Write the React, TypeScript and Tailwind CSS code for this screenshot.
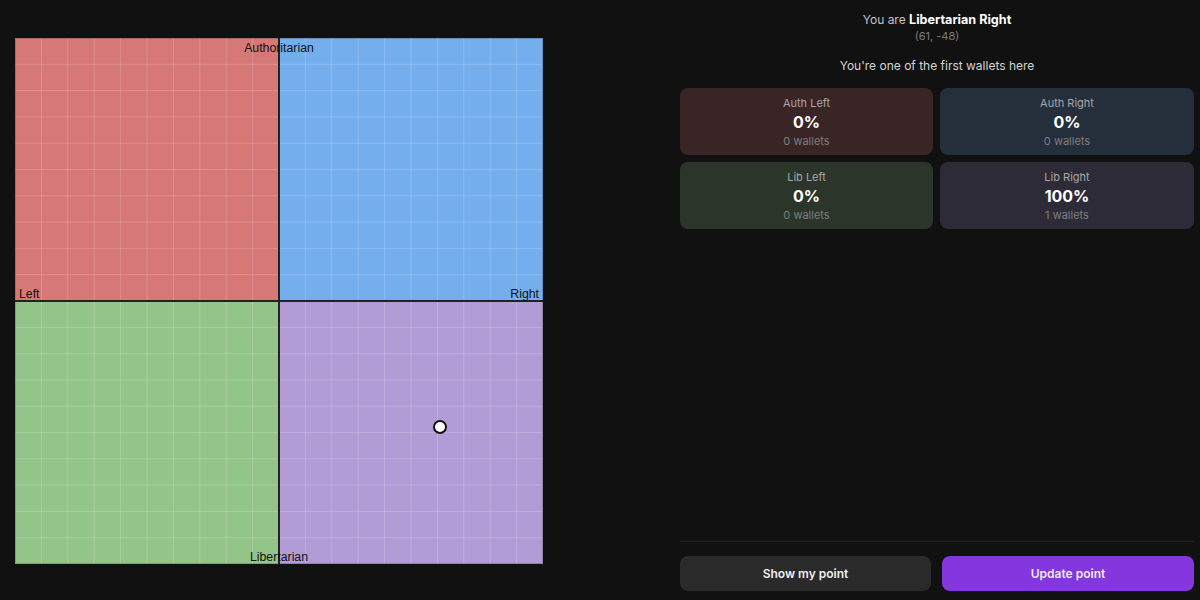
const quadrants = [
  { label: "Auth Left", pct: "0%", wallets: "0 wallets", bg: "bg-[#3a2526]" },
  { label: "Auth Right", pct: "0%", wallets: "0 wallets", bg: "bg-[#252f3b]" },
  { label: "Lib Left", pct: "0%", wallets: "0 wallets", bg: "bg-[#2b352a]" },
  { label: "Lib Right", pct: "100%", wallets: "1 wallets", bg: "bg-[#2e2b38]" },
];

const WIDTH = 528;
const HEIGHT = 526;
const MID_X = WIDTH / 2;
const MID_Y = HEIGHT / 2;

function Compass() {
  const steps = Array.from({ length: 19 }, (_, i) => i + 1);
  return (
    <svg width={WIDTH} height={HEIGHT} viewBox={`0 0 ${WIDTH} ${HEIGHT}`} className="block">
      <rect x="0" y="0" width={MID_X} height={MID_Y} fill="#d67875" />
      <rect x={MID_X} y="0" width={MID_X} height={MID_Y} fill="#74aeed" />
      <rect x="0" y={MID_Y} width={MID_X} height={MID_Y} fill="#93c48a" />
      <rect x={MID_X} y={MID_Y} width={MID_X} height={MID_Y} fill="#b19cd6" />
      {steps.map((i) => (
        <g key={i} stroke="#ffffff" strokeOpacity="0.18" strokeWidth="1">
          <line x1={(i * WIDTH) / 20} y1="0" x2={(i * WIDTH) / 20} y2={HEIGHT} />
          <line x1="0" y1={(i * HEIGHT) / 20} x2={WIDTH} y2={(i * HEIGHT) / 20} />
        </g>
      ))}
      <rect x="0.5" y="0.5" width={WIDTH - 1} height={HEIGHT - 1} fill="none" stroke="#333333" strokeOpacity="0.25" />
      <line x1={MID_X} y1="0" x2={MID_X} y2={HEIGHT} stroke="#222222" strokeWidth="2" />
      <line x1="0" y1={MID_Y} x2={WIDTH} y2={MID_Y} stroke="#222222" strokeWidth="2" />
      <g fontFamily="'Liberation Sans', Arial, sans-serif" fontSize="12.3" fill="#111111">
        <text x={MID_X} y="14" textAnchor="middle">Authoritarian</text>
        <text x={MID_X} y="523" textAnchor="middle">Libertarian</text>
        <text x="4" y="260">Left</text>
        <text x="524" y="260" textAnchor="end">Right</text>
      </g>
      <circle cx="425" cy="389" r="6" fill="#ffffff" stroke="#111111" strokeWidth="2" />
    </svg>
  );
}

export default function App() {
  return (
    <div className="flex h-[600px] w-[1200px] overflow-hidden bg-[#111111] font-['Inter',sans-serif] text-white">
      <div className="w-[680px] shrink-0 pl-[15px] pt-[38px]">
        <Compass />
      </div>

      <div className="flex w-[514px] flex-col pt-[12px]">
        <div className="text-center">
          <p className="text-[12px] leading-[16px] text-[#c4c4c4]">
            You are <span className="text-[12.6px] font-bold text-white">Libertarian Right</span>
          </p>
          <p className="text-[11px] leading-[16px] text-[#7a7a7a]">(61, -48)</p>
        </div>

        <p className="mt-[12px] text-center text-[12px] leading-[20px] text-[#d4d4d4]">
          You're one of the first wallets here
        </p>

        <div className="mt-[12px] grid grid-cols-[253px_1fr] gap-[7px]">
          {quadrants.map((q) => (
            <div key={q.label} className={`flex h-[67px] flex-col items-center justify-center rounded-lg ${q.bg}`}>
              <span className="text-[11px] leading-[16px] text-[#a6a6a6]">{q.label}</span>
              <span className="text-[16px] font-bold leading-[22px] text-white">{q.pct}</span>
              <span className="text-[11px] leading-[16px] text-[#7d7d7d]">{q.wallets}</span>
            </div>
          ))}
        </div>

        <div className="mb-[9px] mt-auto border-t border-[#222222] pt-[14px]">
          <div className="flex gap-[11px]">
            <button className="h-[35px] w-[251px] rounded-lg bg-[#2a2a2a] text-[12px] font-semibold text-[#efefef]">
              Show my point
            </button>
            <button className="h-[35px] flex-1 rounded-lg bg-[#8436df] text-[12px] font-semibold text-[#f3e8ff]">
              Update point
            </button>
          </div>
        </div>
      </div>
    </div>
  );
}
